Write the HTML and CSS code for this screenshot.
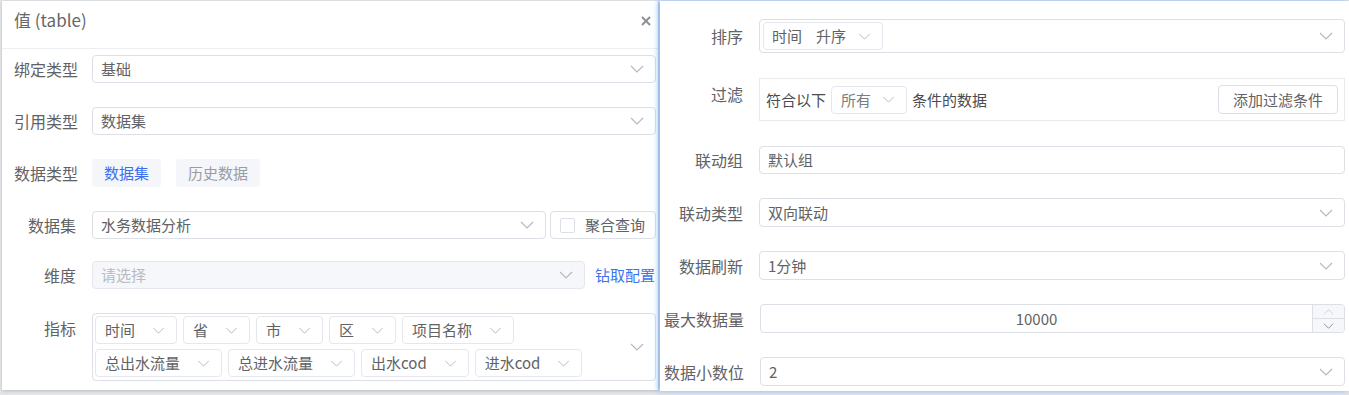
FILE: index.html
```html
<!DOCTYPE html>
<html>
<head>
	<meta charset="utf-8">
	<title>值 (table)</title>
	<link rel="stylesheet" href="styles.css">
</head>
<body>
	<svg class="defs" width="0" height="0">
		<symbol id="chev" viewBox="0 0 14 8"><path d="M1 1l6 6 6-6" fill="none" stroke="currentColor" stroke-width="1.1"/></symbol>
		<symbol id="chev-up" viewBox="0 0 14 8"><path d="M1 7l6-6 6 6" fill="none" stroke="currentColor" stroke-width="1.1"/></symbol>
	</svg>
	<div class="stage">
		<section class="dlg dlg-main">
			<header class="dlg-head">
				<span class="dlg-title">值 (table)</span>
				<svg class="dlg-close" width="10" height="10" viewBox="0 0 10 10"><path d="M1 1l8 8M9 1l-8 8" stroke="#8d9095" stroke-width="2"/></svg>
			</header>
			<div class="dlg-body">
				<div class="row">
					<label class="lbl">绑定类型</label>
					<div class="sel"><span>基础</span><svg class="arr"><use href="#chev"/></svg></div>
				</div>
				<div class="row">
					<label class="lbl">引用类型</label>
					<div class="sel"><span>数据集</span><svg class="arr"><use href="#chev"/></svg></div>
				</div>
				<div class="row">
					<label class="lbl">数据类型</label>
					<div class="tab on">数据集</div>
					<div class="tab">历史数据</div>
				</div>
				<div class="row row-ds">
					<label class="lbl">数据集</label>
					<div class="sel"><span>水务数据分析</span><svg class="arr"><use href="#chev"/></svg></div>
					<div class="chk"><span class="box"></span>聚合查询</div>
				</div>
				<div class="row">
					<label class="lbl">维度</label>
					<div class="sel off"><span>请选择</span><svg class="arr"><use href="#chev"/></svg></div>
					<a class="link">钻取配置</a>
				</div>
				<div class="row row-top">
					<label class="lbl">指标</label>
					<div class="multi">
						<div class="tags">
							<span class="tag">时间<svg class="tarr"><use href="#chev"/></svg></span>
							<span class="tag">省<svg class="tarr"><use href="#chev"/></svg></span>
							<span class="tag">市<svg class="tarr"><use href="#chev"/></svg></span>
							<span class="tag">区<svg class="tarr"><use href="#chev"/></svg></span>
							<span class="tag">项目名称<svg class="tarr"><use href="#chev"/></svg></span>
							<span class="tag">总出水流量<svg class="tarr"><use href="#chev"/></svg></span>
							<span class="tag">总进水流量<svg class="tarr"><use href="#chev"/></svg></span>
							<span class="tag">出水cod<svg class="tarr"><use href="#chev"/></svg></span>
							<span class="tag">进水cod<svg class="tarr"><use href="#chev"/></svg></span>
						</div>
						<svg class="arr"><use href="#chev"/></svg>
					</div>
				</div>
			</div>
		</section>

		<section class="dlg dlg-side">
			<div class="row tall">
				<label class="lbl lbl-r">排序</label>
				<div class="sortbox">
					<span class="tag sort-tag"><span class="gap">时间</span>升序<svg class="tarr"><use href="#chev"/></svg></span>
					<svg class="arr"><use href="#chev"/></svg>
				</div>
			</div>
			<div class="row tall row-top">
				<label class="lbl lbl-r lbl-f">过滤</label>
				<div class="filter">
					<span>符合以下</span>
					<span class="tag mini">所有<svg class="tarr"><use href="#chev"/></svg></span>
					<span>条件的数据</span>
					<button class="btn">添加过滤条件</button>
				</div>
			</div>
			<div class="row">
				<label class="lbl lbl-r">联动组</label>
				<div class="sel h28"><span>默认组</span></div>
			</div>
			<div class="row">
				<label class="lbl lbl-r">联动类型</label>
				<div class="sel"><span>双向联动</span><svg class="arr"><use href="#chev"/></svg></div>
			</div>
			<div class="row">
				<label class="lbl lbl-r">数据刷新</label>
				<div class="sel"><span>1分钟</span><svg class="arr"><use href="#chev"/></svg></div>
			</div>
			<div class="row">
				<label class="lbl lbl-r">最大数据量</label>
				<div class="num">
					<span class="num-val">10000</span>
					<div class="spin">
						<span class="spin-up"><svg><use href="#chev-up"/></svg></span>
						<span class="spin-dn"><svg><use href="#chev"/></svg></span>
					</div>
				</div>
			</div>
			<div class="row">
				<label class="lbl lbl-r">数据小数位</label>
				<div class="sel"><span>2</span><svg class="arr"><use href="#chev"/></svg></div>
			</div>
		</section>
	</div>
</body>
</html>
```

FILE: styles.css
```css
body {
	margin: 0;
	background: #e3e5e9;
	font-family: "Noto Sans CJK SC", "Noto Sans", sans-serif;
	font-size: 15px;
	color: #606266;
}

.defs {
	position: absolute;
}

.stage {
	display: flex;
	align-items: flex-start;
	height: 395px;
	padding-top: 1px;
	box-sizing: border-box;
	overflow: hidden;
}

.dlg {
	background: #fff;
	box-sizing: border-box;
}

.dlg-main {
	width: 656px;
	height: 389px;
	margin-left: 2px;
	flex-shrink: 0;
	box-shadow: 0 1px 3px rgba(0, 0, 0, 0.18);
}

.dlg-side {
	flex: 1;
	height: 390px;
	margin-left: 2px;
	padding: 18px 4px 0 4px;
	box-shadow: -2px 0 5px rgba(70, 150, 255, 0.6);
}

/* header */
.dlg-head {
	height: 48px;
	box-sizing: border-box;
	border-bottom: 1px solid #eceef2;
	display: flex;
	justify-content: space-between;
	padding: 7px 7px 0 12px;
}

.dlg-title {
	font-size: 17px;
	line-height: 24px;
	color: #666;
}

.dlg-close {
	margin-top: 8px;
}

.dlg-body {
	padding: 6px 2px 0 12px;
}

/* rows */
.row {
	display: flex;
	align-items: center;
	margin-bottom: 24px;
}

.row.tall {
	margin-bottom: 25px;
}

.row-ds {
	margin-bottom: 22px;
}

.row-top {
	align-items: flex-start;
}

.lbl {
	width: 62px;
	flex-shrink: 0;
	margin-right: 16px;
	text-align: right;
	font-size: 16px;
	line-height: 28px;
	white-space: nowrap;
}

.row-top .lbl {
	line-height: 30px;
}

.lbl-r {
	width: auto;
	min-width: 79px;
}

.row-top .lbl-f {
	line-height: 32px;
}

/* controls */
.sel {
	flex: 1;
	height: 29px;
	box-sizing: border-box;
	border: 1px solid #dcdfe6;
	border-radius: 4px;
	display: flex;
	align-items: center;
	justify-content: space-between;
	padding: 0 11px 0 8px;
	line-height: 20px;
}

.dlg-main .sel,
.sel.h28 {
	height: 28px;
}

.sel.off {
	background: #f5f7fa;
	border-color: #e4e7ed;
	color: #b8bbc1;
	margin-right: 10px;
}

.arr {
	width: 14px;
	height: 8px;
	color: #b4b7bd;
	flex-shrink: 0;
}

.tab {
	height: 28px;
	line-height: 28px;
	padding: 0 12px;
	margin-right: 15px;
	background: #f4f6f9;
	border-radius: 3px;
	color: #9a9ca1;
}

.tab.on {
	color: #3c6ef2;
}

.row-ds .sel {
	margin-right: 4px;
}

.chk {
	width: 106px;
	height: 28px;
	box-sizing: border-box;
	border: 1px solid #dcdfe6;
	border-radius: 4px;
	display: flex;
	align-items: center;
	padding-left: 9px;
	line-height: 20px;
}

.chk .box {
	width: 13px;
	height: 13px;
	border: 1px solid #dcdfe6;
	border-radius: 2px;
	margin-right: 10px;
}

.link {
	width: 61px;
	color: #3c72ee;
	white-space: nowrap;
	line-height: 20px;
}

.multi {
	flex: 1;
	height: 68px;
	box-sizing: border-box;
	border: 1px solid #dcdfe6;
	border-radius: 4px;
	display: flex;
	align-items: center;
	padding: 2px 11px 3px 2px;
}

.tags {
	flex: 1;
	display: flex;
	flex-wrap: wrap;
	gap: 5px 6px;
}

.tag {
	height: 28px;
	box-sizing: border-box;
	border: 1px solid #e4e7ed;
	border-radius: 4px;
	display: inline-flex;
	align-items: center;
	padding: 0 11px 0 9px;
	line-height: 20px;
	white-space: nowrap;
}

.tarr {
	width: 13px;
	height: 7px;
	margin-left: 17px;
	color: #b4b7bd;
}

/* side panel */
.sortbox {
	flex: 1;
	height: 34px;
	box-sizing: border-box;
	border: 1px solid #dcdfe6;
	border-radius: 4px;
	display: flex;
	align-items: center;
	justify-content: space-between;
	padding: 0 11px 0 3px;
}

.sort-tag {
	padding-left: 8px;
}

.sort-tag .gap {
	margin-right: 14px;
}

.sort-tag .tarr {
	margin-left: 12px;
}

.filter {
	flex: 1;
	height: 43px;
	box-sizing: border-box;
	border: 1px solid #e8eaef;
	display: flex;
	align-items: center;
	padding: 0 6px;
	line-height: 20px;
	color: #4a4c50;
}

.tag.mini {
	margin: 0 5px 0 5px;
	color: #7a7d82;
}

.tag.mini .tarr {
	margin-left: 11px;
}

.btn {
	margin-left: auto;
	height: 29px;
	padding: 0 14px;
	border: 1px solid #dcdfe6;
	border-radius: 4px;
	background: #fff;
	font: inherit;
	font-size: 15px;
	color: #606266;
}

.num {
	flex: 1;
	height: 29px;
	box-sizing: border-box;
	border: 1px solid #dcdfe6;
	border-radius: 4px;
	display: flex;
	overflow: hidden;
}

.num-val {
	flex: 1;
	text-align: center;
	line-height: 27px;
}

.spin {
	width: 31px;
	border-left: 1px solid #dcdfe6;
	background: #f5f7fa;
	display: flex;
	flex-direction: column;
}

.spin span {
	flex: 1;
	display: flex;
	align-items: center;
	justify-content: center;
}

.spin-dn {
	border-top: 1px solid #dcdfe6;
}

.spin svg {
	width: 11px;
	height: 6px;
}

.spin-up svg {
	color: #c8cbd0;
}

.spin-dn svg {
	color: #7d8085;
}
```
